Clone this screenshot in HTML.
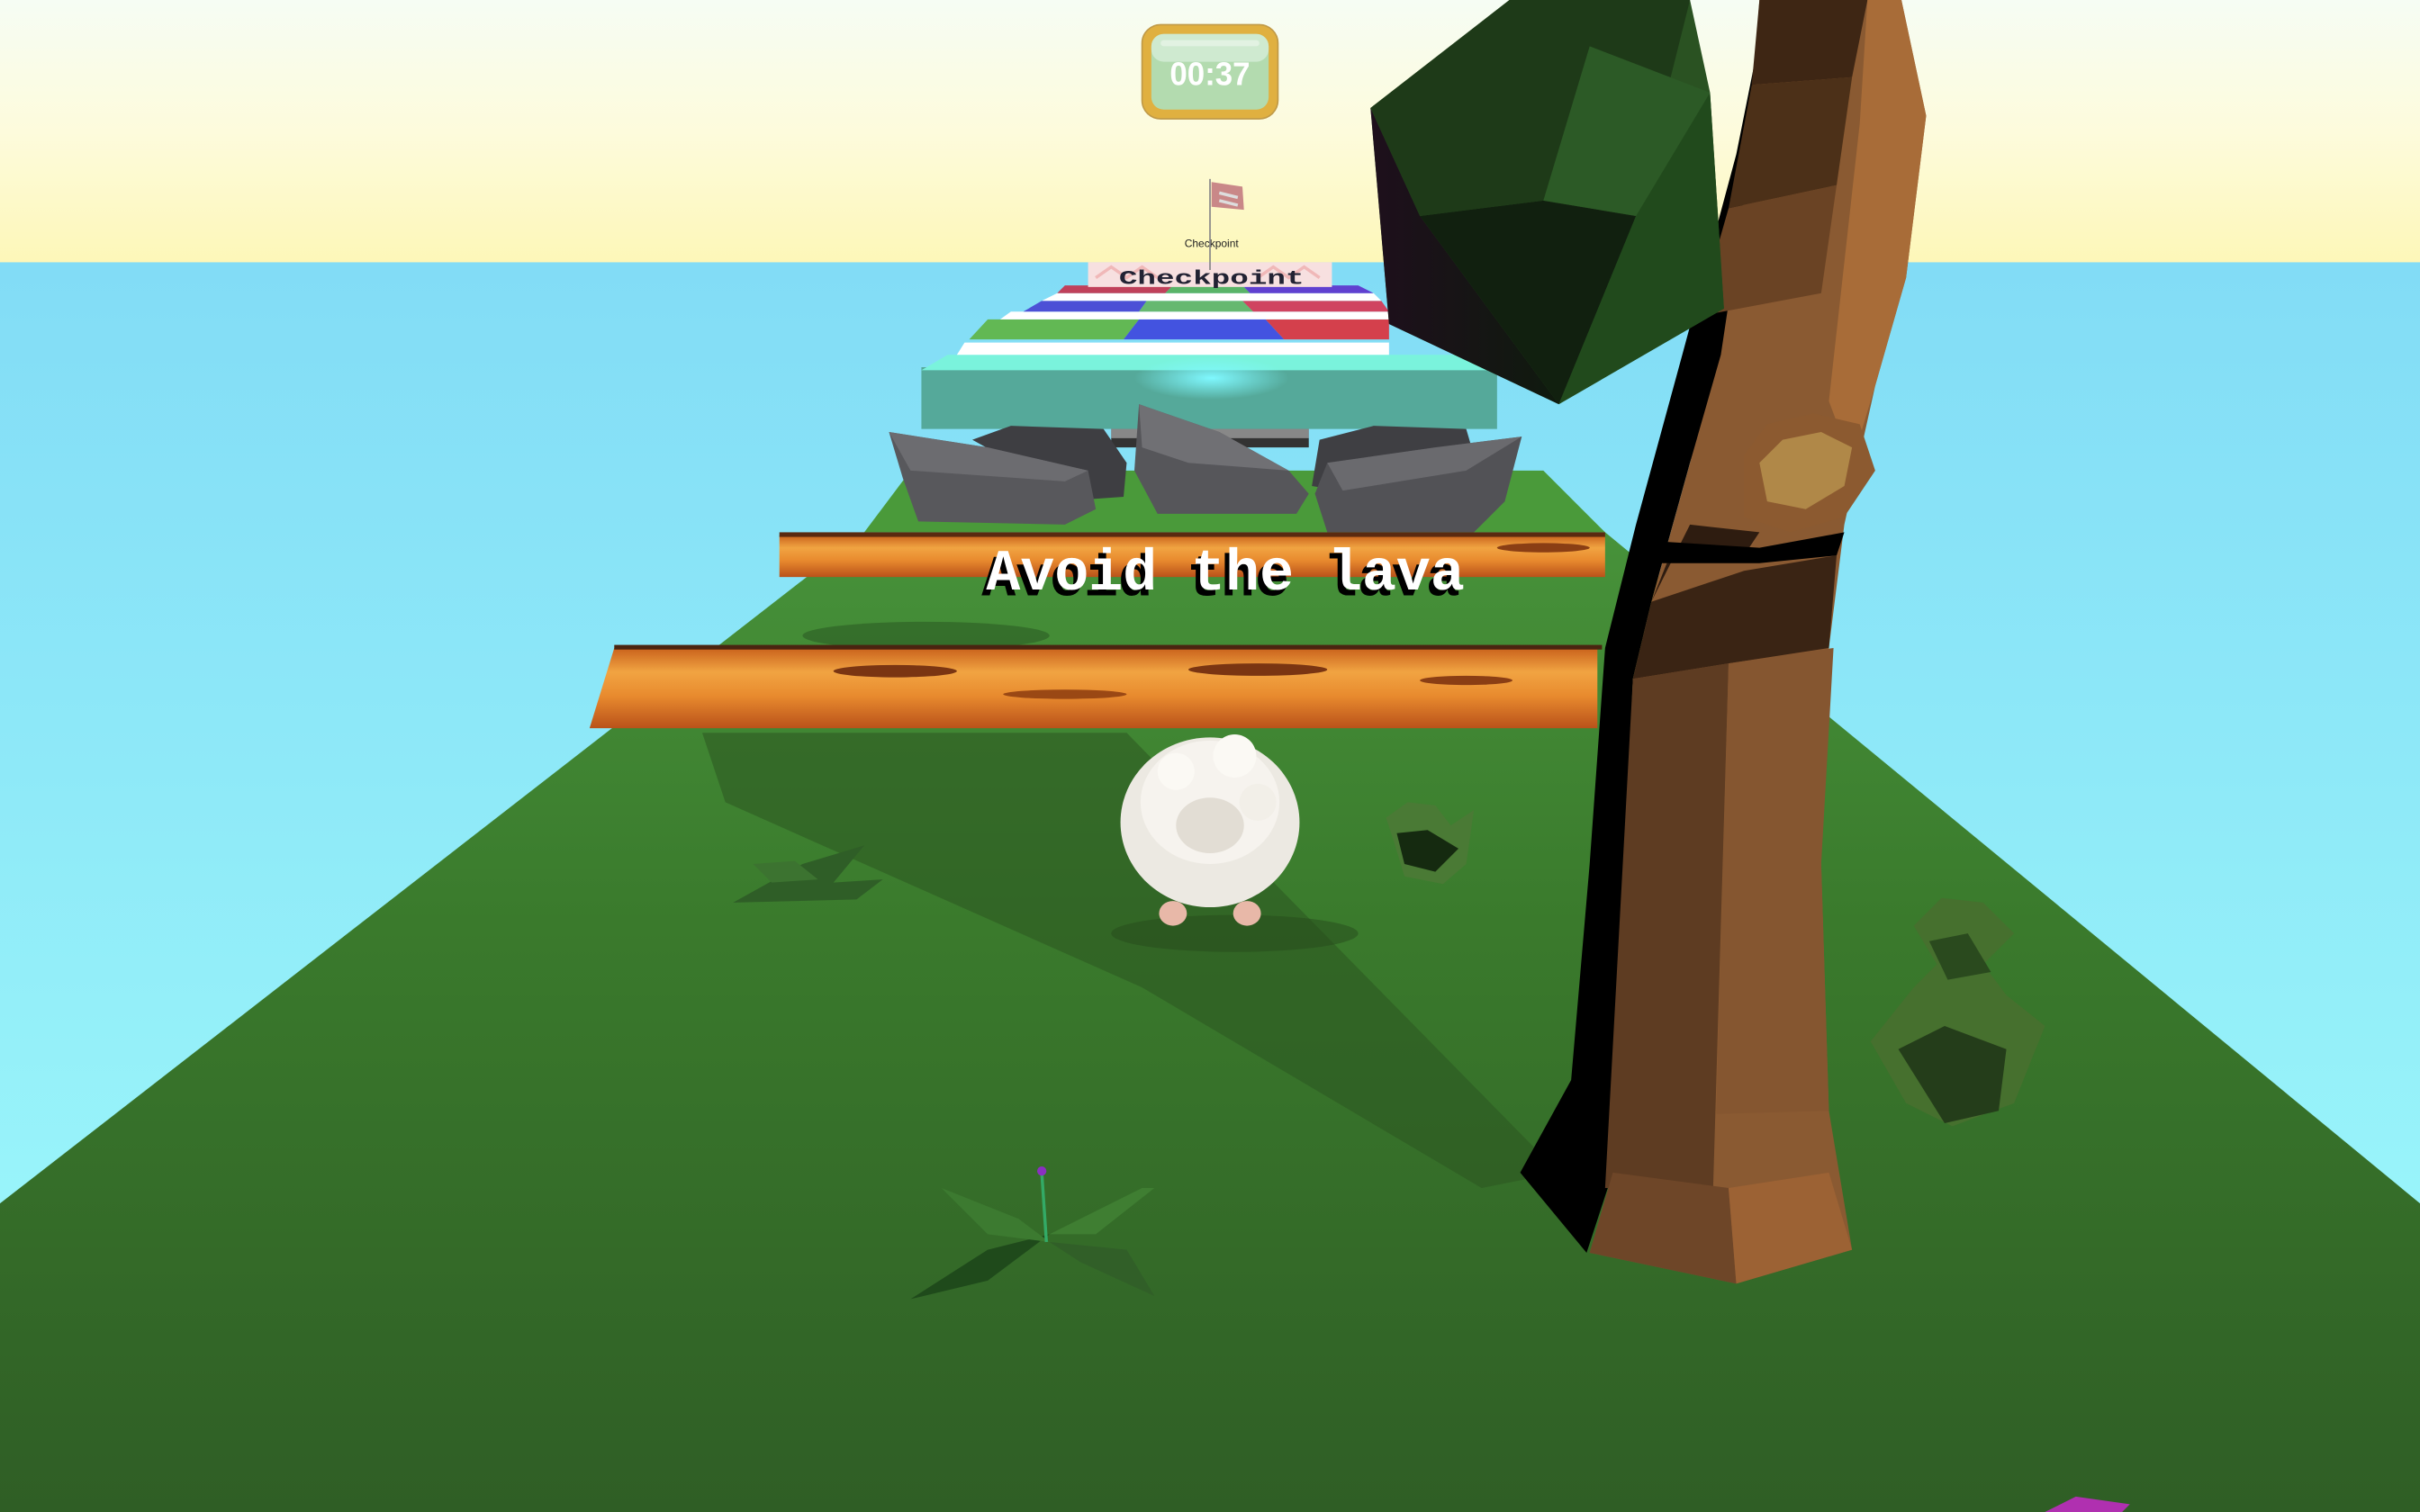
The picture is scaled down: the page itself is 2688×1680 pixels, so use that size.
<!DOCTYPE html>
<html><head><meta charset="utf-8"><style>
html,body{margin:0;padding:0;width:2688px;height:1680px;overflow:hidden;background:#8ff0fa}
svg{display:block}
</style></head><body>
<svg width="2688" height="1680" viewBox="0 0 1568 980" preserveAspectRatio="none" xmlns="http://www.w3.org/2000/svg">
<defs>
<linearGradient id="sky" x1="0" y1="0" x2="0" y2="1"><stop offset="0" stop-color="#f6fdf4"/><stop offset="0.5" stop-color="#fdfbdc"/><stop offset="1" stop-color="#fdf7b8"/></linearGradient>
<linearGradient id="sea" x1="0" y1="0" x2="0" y2="1"><stop offset="0" stop-color="#82dcf6"/><stop offset="1" stop-color="#a0fcfb"/></linearGradient>
<linearGradient id="grass" x1="0" y1="0" x2="0" y2="1"><stop offset="0" stop-color="#47923a"/><stop offset="0.4" stop-color="#3a7a2c"/><stop offset="1" stop-color="#2f5e25"/></linearGradient>
<linearGradient id="lava" x1="0" y1="0" x2="0" y2="1"><stop offset="0" stop-color="#c9621c"/><stop offset="0.3" stop-color="#f1a442"/><stop offset="0.6" stop-color="#e88a2e"/><stop offset="1" stop-color="#b9521a"/></linearGradient>
<radialGradient id="glow" cx="0.5" cy="0.5" r="0.5"><stop offset="0" stop-color="#7ff8ff"/><stop offset="1" stop-color="#7ff8ff" stop-opacity="0"/></radialGradient>
<linearGradient id="canopy" x1="0" y1="0" x2="1" y2="0"><stop offset="0" stop-color="#1e0f1c"/><stop offset="1" stop-color="#0f1a0e"/></linearGradient>
</defs>
<rect x="0" y="0" width="1568" height="171" fill="url(#sky)"/>
<rect x="0" y="170" width="1568" height="810" fill="url(#sea)"/>
<polygon points="560,345 1040,345 1568,780 1568,980 0,980 0,780" fill="url(#grass)"/>
<polygon points="560,345 590,305 1000,305 1040,345" fill="#4a9a3a"/>
<polygon points="455,475 730,475 1010,760 960,770 740,640 560,560 470,520" fill="#2b5520" opacity="0.55"/>
<ellipse cx="600" cy="412" rx="80" ry="9" fill="#2f6226" opacity="0.7"/>
<rect x="505" y="347" width="535" height="27" fill="url(#lava)"/>
<rect x="505" y="345" width="535" height="3" fill="#5a2a10"/>
<polygon points="398,420 1035,420 1035,472 382,472" fill="url(#lava)"/>
<rect x="398" y="418" width="640" height="3" fill="#4a2410"/>
<ellipse cx="580" cy="435" rx="40" ry="4" fill="#7a3512"/>
<ellipse cx="815" cy="434" rx="45" ry="4" fill="#7a3512"/>
<ellipse cx="950" cy="441" rx="30" ry="3" fill="#8a3e14"/>
<ellipse cx="690" cy="450" rx="40" ry="3" fill="#9a4814"/>
<ellipse cx="1000" cy="355" rx="30" ry="3" fill="#8a3e14"/>
<polygon points="597,238 970,238 970,278 597,278" fill="#55a99a"/>
<polygon points="614,230 955,230 970,240 597,240" fill="#7af3dc"/>
<ellipse cx="785" cy="245" rx="50" ry="14" fill="url(#glow)"/>
<rect x="720" y="278" width="128" height="12" fill="#333"/>
<rect x="720" y="278" width="128" height="6" fill="#ddd" opacity="0.5"/>
<polygon points="625,222 900,222 900,230 620,230" fill="#fff"/>
<polygon points="640,207 738,207 728,220 628,220" fill="#62b854"/>
<polygon points="738,207 820,207 832,220 728,220" fill="#4353e0"/>
<polygon points="820,207 900,207 900,220 832,220" fill="#d4404c"/>
<polygon points="655,202 900,202 900,207 648,207" fill="#fff"/>
<polygon points="675,195 743,195 738,202 663,202" fill="#4c50d6"/>
<polygon points="743,195 805,195 812,202 738,202" fill="#66b870"/>
<polygon points="805,195 895,195 900,202 812,202" fill="#d04460"/>
<polygon points="685,190 890,190 895,195 675,195" fill="#fff"/>
<polygon points="690,185 760,185 755,190 685,190" fill="#c0405a"/>
<polygon points="760,185 805,185 810,190 755,190" fill="#5ab468"/>
<polygon points="805,185 880,185 890,190 810,190" fill="#6040d0"/>
<rect x="705" y="170" width="158" height="16" fill="#f7e0e0"/>
<path d="M710,180 l10,-7 l10,7 l10,-7 l10,7 M815,180 l10,-7 l10,7 l10,-7 l10,7" stroke="#f0b8b8" stroke-width="2" fill="none"/>
<text x="785" y="184" font-family="Liberation Mono, monospace" font-size="13" font-weight="bold" fill="#223" text-anchor="middle" textLength="120" lengthAdjust="spacingAndGlyphs">Checkpoint</text>
<text x="785" y="160" font-family="Liberation Sans, sans-serif" font-size="7" fill="#222" text-anchor="middle">Checkpoint</text>
<line x1="784" y1="116" x2="784" y2="175" stroke="#888" stroke-width="1"/>
<polygon points="785,118 805,121 806,136 785,134" fill="#c98888"/>
<path d="M790,125 l12,3 M790,130 l12,3" stroke="#ddd" stroke-width="2"/>
<polygon points="630,285 655,276 715,278 730,300 728,322 700,324" fill="#3e3e42"/>
<polygon points="576,280 640,290 705,305 710,330 690,340 595,338 585,310" fill="#58585c"/>
<polygon points="576,280 640,290 705,305 690,312 590,305" fill="#6c6c70"/>
<polygon points="738,262 790,280 835,305 848,320 840,333 750,333 735,305" fill="#56565a"/>
<polygon points="738,262 790,280 835,305 770,300 740,290" fill="#707074"/>
<polygon points="855,285 890,276 950,278 955,295 880,320 850,315" fill="#3f3f43"/>
<polygon points="860,300 930,290 986,283 975,325 955,345 860,345 852,320" fill="#525256"/>
<polygon points="860,300 930,290 986,283 950,305 870,318" fill="#6a6a6e"/>
<text x="791" y="386" font-family="Liberation Mono, monospace" font-size="38" font-weight="bold" fill="#000" text-anchor="middle" textLength="310" lengthAdjust="spacingAndGlyphs">Avoid the lava</text>
<text x="794" y="382" font-family="Liberation Mono, monospace" font-size="38" font-weight="bold" fill="#fff" text-anchor="middle" textLength="310" lengthAdjust="spacingAndGlyphs">Avoid the lava</text>
<ellipse cx="800" cy="605" rx="80" ry="12" fill="#254a1c" opacity="0.5"/>
<ellipse cx="760" cy="592" rx="9" ry="8" fill="#e8b8a8"/>
<ellipse cx="808" cy="592" rx="9" ry="8" fill="#e8b8a8"/>
<ellipse cx="784" cy="533" rx="58" ry="55" fill="#ece9e2"/>
<ellipse cx="784" cy="520" rx="45" ry="40" fill="#f6f3ee"/>
<ellipse cx="784" cy="535" rx="22" ry="18" fill="#e2ddd4"/>
<circle cx="762" cy="500" r="12" fill="#fbf9f4"/><circle cx="800" cy="490" r="14" fill="#fbf9f4"/><circle cx="815" cy="520" r="12" fill="#f2efe8"/>
<g fill="#2f5e27"><polygon points="475,585 520,560 560,548 540,572 572,570 555,583"/><polygon points="488,560 515,558 530,570 500,572" fill="#3c7330"/></g>
<g><polygon points="590,842 640,810 680,800 640,830" fill="#1f4a1b"/><polygon points="610,770 660,790 680,805 640,800" fill="#3c7a30"/><polygon points="680,800 740,770 748,770 710,800" fill="#3f7e32"/><polygon points="680,805 730,810 748,840 700,818" fill="#315f28"/><line x1="675" y1="760" x2="678" y2="805" stroke="#3a6" stroke-width="2"/><circle cx="675" cy="759" r="3" fill="#8a30c0"/></g>
<g><polygon points="898,530 912,520 930,522 940,535 955,525 950,560 935,573 910,568 903,545" fill="#4a7a35"/><polygon points="905,540 925,538 945,550 930,565 910,560" fill="#152a10"/></g>
<g><polygon points="1240,600 1258,582 1285,585 1305,605 1285,625 1300,645 1325,665 1305,715 1265,730 1235,715 1212,675 1240,640 1255,625" fill="#46702e"/><polygon points="1230,680 1260,665 1300,680 1295,720 1260,728" fill="#243d1a"/><polygon points="1250,610 1275,605 1290,630 1262,635" fill="#2a4a1e"/></g>
<polygon points="1325,980 1345,970 1380,975 1375,980" fill="#b030b0"/>
<!-- tree trunk -->
<polygon points="1100,0 1145,0 1125,100 1090,230 1060,340 1040,420 1030,560 1018,700 985,760 1028,812 1045,760 1058,440 1070,390 1095,300 1120,220 1140,120 1160,0" fill="#000"/>
<polygon points="1140,0 1232,0 1248,75 1235,180 1215,250 1195,340 1185,420 1180,560 1185,720 1200,810 1125,832 1030,812 1045,760 1058,440 1070,390 1095,300 1115,230 1130,130" fill="#8a5a32"/>
<polygon points="1140,0 1210,0 1200,50 1135,55" fill="#3e2614"/>
<polygon points="1135,55 1200,50 1190,120 1120,135" fill="#4c3018"/>
<polygon points="1120,135 1190,120 1180,190 1100,205" fill="#6a4324"/>
<polygon points="1210,0 1232,0 1248,75 1235,180 1215,250 1200,300 1185,260 1195,170 1205,80" fill="#a86c38"/>
<polygon points="1070,390 1095,340 1140,345 1130,360 1080,365" fill="#2e1c10"/>
<polygon points="1058,440 1070,390 1130,370 1190,360 1185,420 1120,430" fill="#3a2414"/>
<polygon points="1058,440 1120,430 1110,770 1040,770" fill="#5e3c22"/>
<polygon points="1120,430 1188,420 1180,560 1185,720 1112,722" fill="#855630"/>
<polygon points="1030,812 1045,760 1120,770 1125,832" fill="#6e4628"/>
<polygon points="1120,770 1185,760 1200,810 1125,832" fill="#9c6234"/>
<polygon points="1130,295 1145,275 1175,268 1205,275 1215,305 1195,335 1160,345 1130,335" fill="#8c5a30"/>
<polygon points="1140,300 1155,285 1180,280 1200,290 1195,315 1170,330 1145,325" fill="#b08848"/>
<polygon points="1060,350 1140,355 1195,345 1190,360 1140,365 1070,365" fill="#000"/>
<!-- canopy -->
<polygon points="888,70 978,0 1095,0 1108,60 1117,200 1010,262 900,210" fill="#2a5222"/>
<polygon points="888,70 920,140 1010,262 900,210" fill="url(#canopy)"/>
<polygon points="920,140 1000,130 1060,140 1010,262" fill="#11200f"/>
<polygon points="978,0 1095,0 1060,140 1000,130 920,140 888,70" fill="#1e3a18"/>
<polygon points="1060,140 1108,60 1117,200 1010,262" fill="#214a1c"/>
<polygon points="1000,130 1060,140 1108,60 1030,30" fill="#2c5a26"/>
<rect x="740" y="16" width="88" height="61" rx="12" fill="#e0b040" stroke="#c09a48" stroke-width="1"/>
<rect x="746" y="22" width="76" height="49" rx="8" fill="#b3dbaf"/>
<rect x="746" y="22" width="76" height="18" rx="8" fill="#cfead0"/>
<rect x="752" y="26" width="64" height="4" rx="2" fill="#e2f2e2"/>
<text x="784" y="55" font-family="Liberation Sans, sans-serif" font-size="21" font-weight="bold" fill="#fff" text-anchor="middle" textLength="52" lengthAdjust="spacingAndGlyphs">00:37</text>
</svg>
</body></html>
